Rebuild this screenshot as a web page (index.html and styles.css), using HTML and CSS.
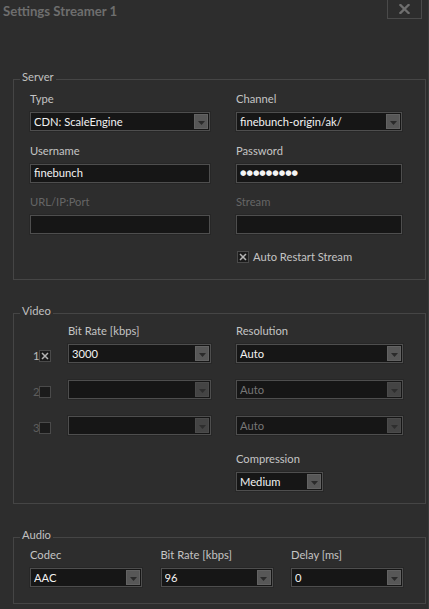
FILE: index.html
```html
<!DOCTYPE html>
<html>
<head>
<meta charset="utf-8">
<title>Settings Streamer 1</title>
<link rel="stylesheet" href="styles.css">
</head>
<body>
<div class="window">
  <div class="titlebar">
    <span class="title">Settings Streamer 1</span>
    <button class="close" type="button" aria-label="Close">
      <svg width="11" height="10" viewBox="0 0 11 10"><path d="M1.5 1 L9.5 9 M9.5 1 L1.5 9" stroke="#6f6f6f" stroke-width="2.3" stroke-linecap="square" fill="none"/></svg>
    </button>
  </div>

  <div class="content">
    <fieldset class="group">
      <legend>Server</legend>
      <div class="server-grid">
        <div class="field">
          <label class="lbl">Type</label>
          <div class="select wide-l"><span class="val">CDN: ScaleEngine</span><span class="arrow"><svg width="7" height="4" viewBox="0 0 7 4"><polygon points="0,0 7,0 3.5,4" fill="#2a2a2a"/></svg></span></div>
        </div>
        <div class="field">
          <label class="lbl">Channel</label>
          <div class="select"><span class="val">finebunch-origin/ak/</span><span class="arrow"><svg width="7" height="4" viewBox="0 0 7 4"><polygon points="0,0 7,0 3.5,4" fill="#2a2a2a"/></svg></span></div>
        </div>
        <div class="field">
          <label class="lbl">Username</label>
          <div class="input"><span class="val">finebunch</span></div>
        </div>
        <div class="field">
          <label class="lbl">Password</label>
          <div class="input"><span class="val dots">●●●●●●●●●</span></div>
        </div>
        <div class="field">
          <label class="lbl off">URL/IP:Port</label>
          <div class="input"></div>
        </div>
        <div class="field">
          <label class="lbl off">Stream</label>
          <div class="input"></div>
        </div>
        <div class="check-row">
          <span class="box"><svg width="8" height="8" viewBox="0 0 8 8"><path d="M1 1 L7 7 M7 1 L1 7" stroke="#b4b4b4" stroke-width="1.5" fill="none"/></svg></span>
          <span class="lbl">Auto Restart Stream</span>
        </div>
      </div>
    </fieldset>

    <fieldset class="group video">
      <legend>Video</legend>
      <div class="video-body">
        <div class="vrow head">
          <span class="marker"></span>
          <label class="lbl br">Bit Rate [kbps]</label>
          <label class="lbl res">Resolution</label>
        </div>
        <div class="vrows">
          <div class="vrow">
            <span class="marker"><span class="num">1</span><span class="box"><svg width="8" height="8" viewBox="0 0 8 8"><path d="M1 1 L7 7 M7 1 L1 7" stroke="#b4b4b4" stroke-width="1.5" fill="none"/></svg></span></span>
            <div class="select br"><span class="val">3000</span><span class="arrow"><svg width="7" height="4" viewBox="0 0 7 4"><polygon points="0,0 7,0 3.5,4" fill="#2a2a2a"/></svg></span></div>
            <div class="select res"><span class="val">Auto</span><span class="arrow"><svg width="7" height="4" viewBox="0 0 7 4"><polygon points="0,0 7,0 3.5,4" fill="#2a2a2a"/></svg></span></div>
          </div>
          <div class="vrow">
            <span class="marker"><span class="num off">2</span><span class="box"></span></span>
            <div class="select br disabled"><span class="val"></span><span class="arrow"><svg width="7" height="4" viewBox="0 0 7 4"><polygon points="0,0 7,0 3.5,4" fill="#2e2e2e"/></svg></span></div>
            <div class="select res disabled"><span class="val">Auto</span><span class="arrow"><svg width="7" height="4" viewBox="0 0 7 4"><polygon points="0,0 7,0 3.5,4" fill="#2e2e2e"/></svg></span></div>
          </div>
          <div class="vrow">
            <span class="marker"><span class="num off">3</span><span class="box"></span></span>
            <div class="select br disabled"><span class="val"></span><span class="arrow"><svg width="7" height="4" viewBox="0 0 7 4"><polygon points="0,0 7,0 3.5,4" fill="#2e2e2e"/></svg></span></div>
            <div class="select res disabled"><span class="val">Auto</span><span class="arrow"><svg width="7" height="4" viewBox="0 0 7 4"><polygon points="0,0 7,0 3.5,4" fill="#2e2e2e"/></svg></span></div>
          </div>
        </div>
        <div class="field compression">
          <label class="lbl">Compression</label>
          <div class="select comp"><span class="val">Medium</span><span class="arrow"><svg width="7" height="4" viewBox="0 0 7 4"><polygon points="0,0 7,0 3.5,4" fill="#2a2a2a"/></svg></span></div>
        </div>
      </div>
    </fieldset>

    <fieldset class="group audio">
      <legend>Audio</legend>
      <div class="audio-grid">
        <div class="field">
          <label class="lbl">Codec</label>
          <div class="select"><span class="val">AAC</span><span class="arrow"><svg width="7" height="4" viewBox="0 0 7 4"><polygon points="0,0 7,0 3.5,4" fill="#2a2a2a"/></svg></span></div>
        </div>
        <div class="field">
          <label class="lbl">Bit Rate [kbps]</label>
          <div class="select"><span class="val">96</span><span class="arrow"><svg width="7" height="4" viewBox="0 0 7 4"><polygon points="0,0 7,0 3.5,4" fill="#2a2a2a"/></svg></span></div>
        </div>
        <div class="field">
          <label class="lbl">Delay [ms]</label>
          <div class="select"><span class="val">0</span><span class="arrow"><svg width="7" height="4" viewBox="0 0 7 4"><polygon points="0,0 7,0 3.5,4" fill="#2a2a2a"/></svg></span></div>
        </div>
      </div>
    </fieldset>
  </div>
</div>
</body>
</html>
```
FILE: styles.css
```css
* { box-sizing: border-box; }
html, body {
  margin: 0;
  padding: 0;
  background: #2d2d2d;
}
body {
  font-family: Lato, "Liberation Sans", sans-serif;
  font-size: 11.2px;
  color: #c4c4c4;
}
.window {
  width: 429px;
  height: 609px;
  overflow: hidden;
  border-right: 1px solid #3a3a3a;
}
.titlebar {
  height: 20px;
  display: flex;
  align-items: flex-start;
  justify-content: space-between;
}
.title {
  margin: 4px 0 0 3px;
  font-weight: bold;
  font-size: 13.2px;
  line-height: 14px;
  color: #6e6e6e;
}
.close {
  width: 35px;
  height: 19px;
  margin: 0 6px 0 0;
  padding: 0;
  background: #2d2d2d;
  border: 1px solid #4a4a4a;
  border-top: none;
  display: flex;
  align-items: center;
  justify-content: center;
}
.content {
  padding: 50px 2px 0 13px;
}
.group {
  margin: 0;
  padding: 0;
  min-inline-size: 0;
  border: 1px solid #454545;
  width: 413px;
}
.group legend {
  margin-left: 6px;
  padding: 0 2px 4px;
  font-size: 11.2px;
  line-height: 14px;
  color: #c0c0c0;
}
.video, .audio { margin-top: 24px; }

.lbl {
  display: block;
  line-height: 14px;
  color: #c4c4c4;
  white-space: nowrap;
}
.lbl.off { color: #666; }
.field { display: flex; flex-direction: column; }
.field .lbl { margin-bottom: 6px; }

.select, .input {
  height: 19px;
  border: 1px solid #4e4e4e;
  background: #161616;
  display: flex;
  align-items: center;
  color: #f2f2f2;
  padding-left: 3px;
  box-shadow: 0 0 0 1px #272727;
}
.val {
  flex: 1;
  line-height: 14px;
  white-space: nowrap;
  overflow: hidden;
}
.dots {
  font-family: "DejaVu Sans", sans-serif;
  font-size: 7.4px;
  letter-spacing: 0;
  color: #f4f4f4;
}
.arrow {
  width: 14px;
  height: 15px;
  margin-right: 1px;
  background: #575757;
  border: 1px solid #626262;
  display: flex;
  align-items: center;
  justify-content: center;
  padding-top: 2px;
}
.select.disabled { color: #777; }
.select.disabled .arrow { background: #444; border-color: #4b4b4b; }

.box {
  width: 12px;
  height: 12px;
  border: 1px solid #4a4a4a;
  background: #1b1b1b;
  display: flex;
  align-items: center;
  justify-content: center;
  flex: none;
}

/* Server */
.server-grid {
  display: grid;
  grid-template-columns: 180px 166px;
  column-gap: 26px;
  row-gap: 12.5px;
  padding: 4px 0 15px 16px;
}
.check-row {
  grid-column: 2;
  display: flex;
  align-items: center;
  gap: 4px;
  height: 14px;
  margin-top: 3.5px;
  padding-left: 1px;
}

/* Video */
.video-body {
  padding: 2px 0 12px 18px;
}
.vrow { display: flex; }
.vrow.head { margin-bottom: 6px; }
.vrows { display: flex; flex-direction: column; gap: 17px; }
.marker {
  width: 36px;
  flex: none;
  display: flex;
  align-items: center;
  align-self: flex-end;
  height: 12px;
  margin-bottom: 1px;
  line-height: 12px;
}
.vrow.head .marker { height: 0; }
.num { width: 7px; color: #bdbdbd; padding-left: 1px; }
.num.off { color: #5e5e5e; }
.br { width: 143px; flex: none; }
.res { width: 167px; flex: none; margin-left: 25px; }
.compression { margin: 17px 0 0 204px; }
.comp { width: 87px; }

/* Audio */
.audio-grid {
  display: grid;
  grid-template-columns: 112px 112px 112px;
  column-gap: 18.5px;
  padding: 2px 0 16px 16px;
}
```
